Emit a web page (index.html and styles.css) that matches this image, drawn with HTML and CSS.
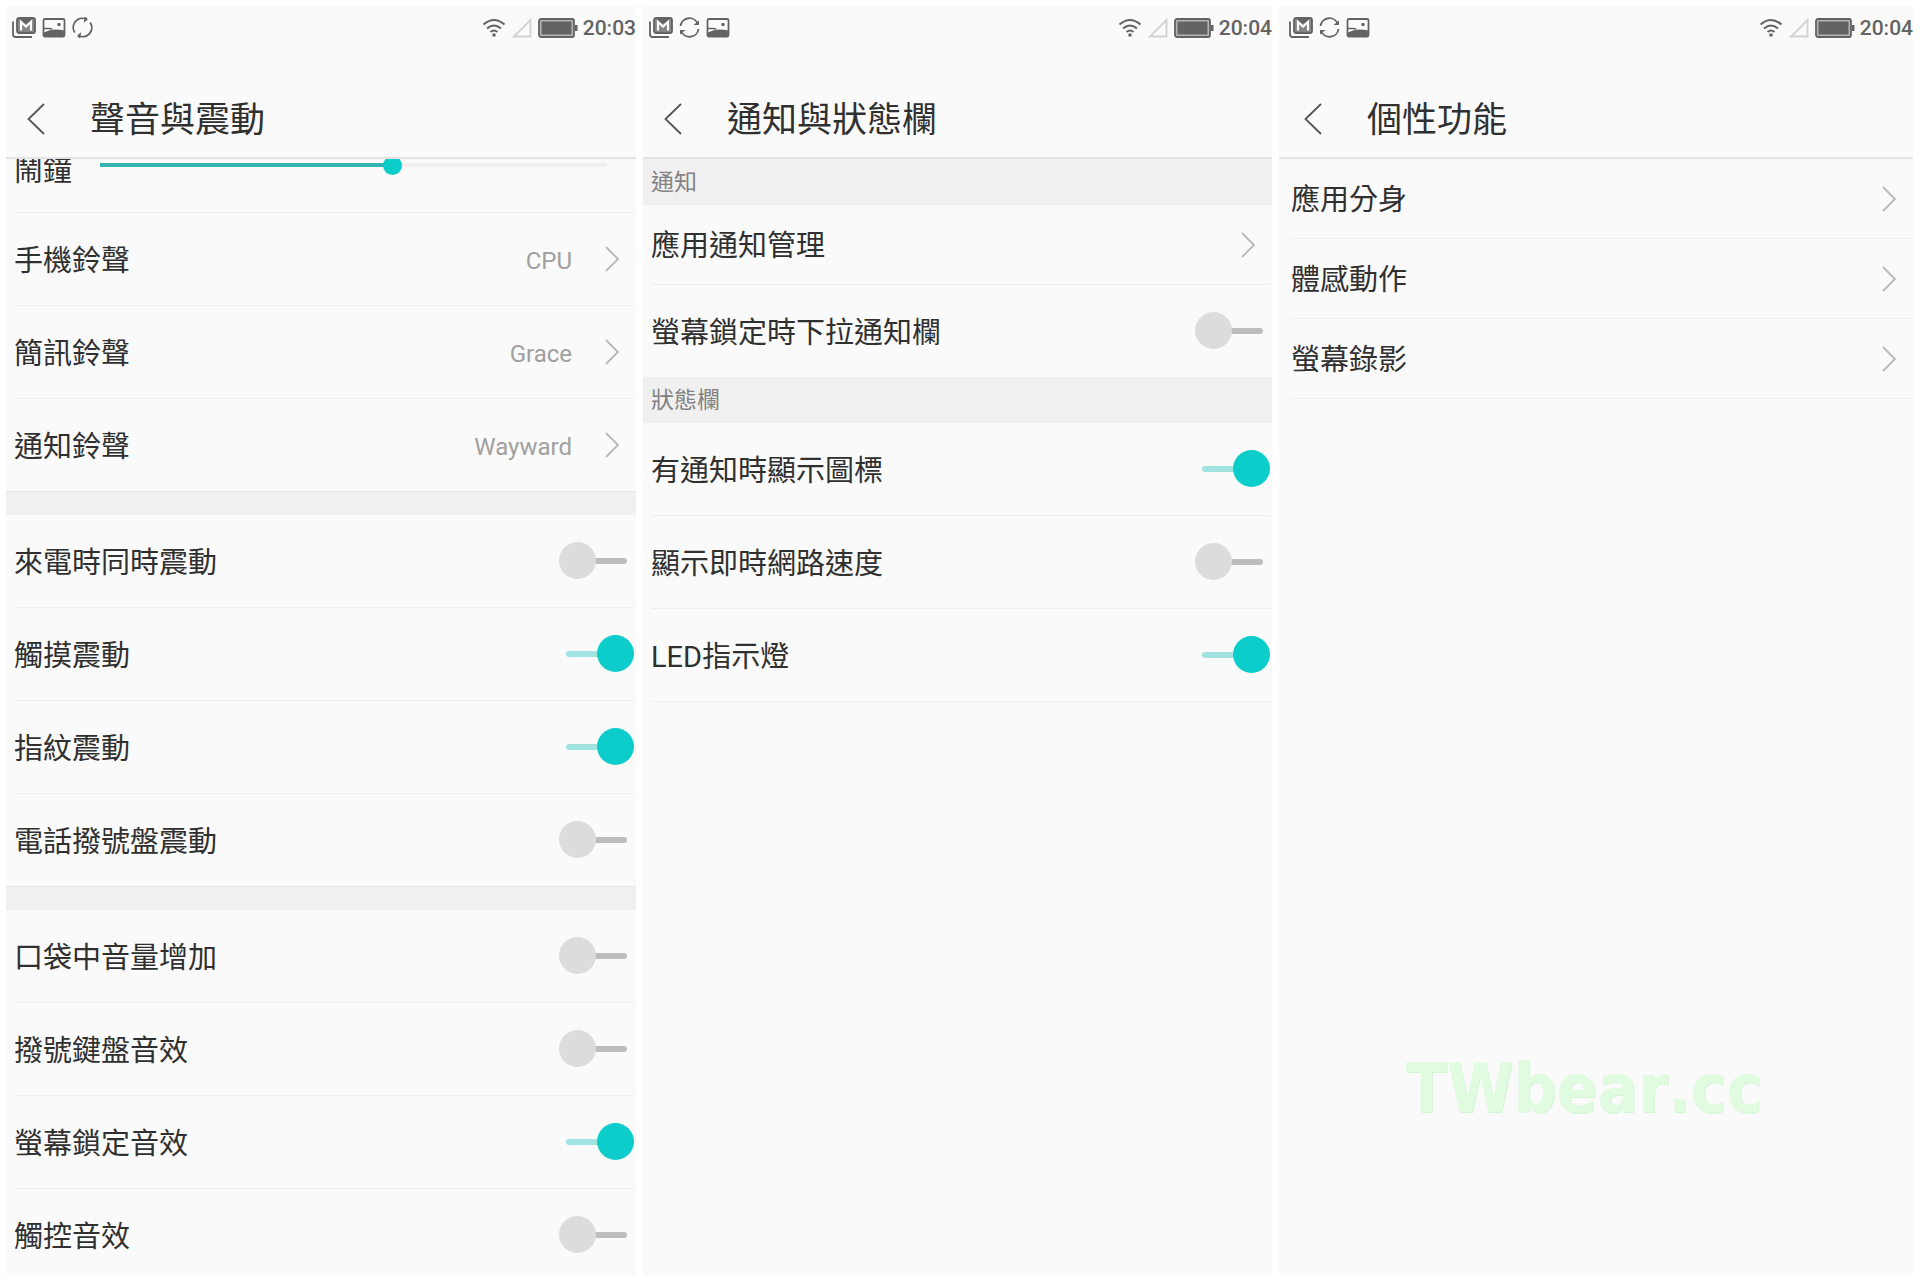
FILE: index.html
```html
<!DOCTYPE html>
<html lang="zh-Hant">
<head>
    <meta charset="UTF-8">
    <meta name="viewport" content="width=device-width, initial-scale=1.0">
    <title>設定</title>
    <link rel="stylesheet" href="styles.css">
</head>
<body>
    <!-- Shared icons -->
    <svg class="sprite" aria-hidden="true">
        <symbol id="icon-mail" viewBox="0 0 24 21">
            <path d="M1 4.500v13q0 2.500 2.500 2.500H20" fill="none" stroke="currentColor" stroke-width="1.800"/>
            <rect x="5" y="1" width="18" height="15" rx="2" fill="#858585" stroke="currentColor" stroke-width="1.800"/>
            <path d="M9 13.500V5l5 4.500L19 5v8.500" fill="none" stroke="#fafafa" stroke-width="2.200"/>
            <path d="M8 2h12l-6 5z" fill="currentColor"/>
        </symbol>
        <symbol id="icon-image" viewBox="0 0 24 21">
            <rect x="1.500" y="2" width="21" height="17.500" rx="1.500" fill="none" stroke="currentColor" stroke-width="1.800"/>
            <path d="M2 19v-3.500Q8 12.500 13 12.500t9.500 1V19z" fill="currentColor"/>
            <path d="M2 11.500h4.500l4 .5" fill="none" stroke="currentColor" stroke-width="1.500"/>
            <circle cx="17" cy="7.500" r="1.700" fill="currentColor"/>
        </symbol>
        <symbol id="icon-refresh" viewBox="0 0 21 21">
            <g fill="none" stroke="currentColor" stroke-width="1.800">
                <path d="M1.500 9A9 9 0 0 1 19 7.500"/>
                <path d="M19.500 12A9 9 0 0 1 2 13.500"/>
            </g>
            <path d="M14.500 8h5.500V3.500zM6.500 13H1v4.500z" fill="currentColor"/>
        </symbol>
        <symbol id="icon-sync" viewBox="0 0 21 21">
            <g transform="rotate(-42 10.500 10.500)">
                <g fill="none" stroke="currentColor" stroke-width="1.800">
                    <path d="M1.500 9A9 9 0 0 1 19 7.500"/>
                    <path d="M19.500 12A9 9 0 0 1 2 13.500"/>
                </g>
                <path d="M14.500 8h5.500V3.500zM6.500 13H1v4.500z" fill="currentColor"/>
            </g>
        </symbol>
        <symbol id="icon-wifi" viewBox="0 0 24 20">
            <g fill="none" stroke="currentColor" stroke-width="2">
                <path d="M1.500 6.500q10.500-9 21 0"/>
                <path d="M5 10.500q7-6 14 0"/>
                <path d="M8.500 14q3.500-3 7 0"/>
            </g>
            <circle cx="12" cy="17" r="1.800" fill="currentColor"/>
        </symbol>
        <symbol id="icon-signal" viewBox="0 0 20 20">
            <path d="M18.500 2v16.500H2z" fill="none" stroke="#d2d2d2" stroke-width="1.800"/>
        </symbol>
        <symbol id="icon-battery" viewBox="0 0 40 20">
            <rect x="1" y="1" width="35" height="18" rx="2" fill="#b4b4b4" stroke="currentColor" stroke-width="1.800"/>
            <rect x="3.500" y="3.500" width="30" height="13" fill="currentColor"/>
            <path d="M37 7h2.500v6H37z" fill="currentColor"/>
        </symbol>
        <symbol id="icon-back" viewBox="0 0 18 32">
            <path d="M17 1L1.500 16 17 31" fill="none" stroke="currentColor" stroke-width="1.800"/>
        </symbol>
        <symbol id="icon-next" viewBox="0 0 14 26">
            <path d="M1 1l12 12L1 25" fill="none" stroke="currentColor" stroke-width="1.800"/>
        </symbol>
    </svg>

    <div class="screens">
        <!-- Sound and vibration -->
        <section class="screen">
            <header class="screen-header">
                <div class="status-bar">
                    <svg class="icon-wide"><use href="#icon-mail"/></svg>
                    <svg class="icon-wide"><use href="#icon-image"/></svg>
                    <svg class="icon-round"><use href="#icon-sync"/></svg>
                    <div class="status-right">
                        <svg class="icon-wifi"><use href="#icon-wifi"/></svg>
                        <svg class="icon-signal"><use href="#icon-signal"/></svg>
                        <svg class="icon-battery"><use href="#icon-battery"/></svg>
                        <time>20:03</time>
                    </div>
                </div>
                <div class="title-bar">
                    <button class="back-btn" aria-label="返回"><svg><use href="#icon-back"/></svg></button>
                    <h1>聲音與震動</h1>
                </div>
            </header>
            <main class="screen-body">
                <div class="group scrolled">
                    <div class="row slider-row">
                        <label for="alarmVolume">鬧鐘</label>
                        <input type="range" id="alarmVolume" class="slider" min="0" max="100" value="58">
                    </div>
                    <a class="row" href="#"><span>手機鈴聲</span><span class="value">CPU</span><svg class="next"><use href="#icon-next"/></svg></a>
                    <a class="row" href="#"><span>簡訊鈴聲</span><span class="value">Grace</span><svg class="next"><use href="#icon-next"/></svg></a>
                    <a class="row" href="#"><span>通知鈴聲</span><span class="value">Wayward</span><svg class="next"><use href="#icon-next"/></svg></a>
                </div>
                <div class="divider"></div>
                <div class="group">
                    <label class="row"><span>來電時同時震動</span><input type="checkbox" class="switch"></label>
                    <label class="row"><span>觸摸震動</span><input type="checkbox" class="switch" checked></label>
                    <label class="row"><span>指紋震動</span><input type="checkbox" class="switch" checked></label>
                    <label class="row"><span>電話撥號盤震動</span><input type="checkbox" class="switch"></label>
                </div>
                <div class="divider"></div>
                <div class="group">
                    <label class="row"><span>口袋中音量增加</span><input type="checkbox" class="switch"></label>
                    <label class="row"><span>撥號鍵盤音效</span><input type="checkbox" class="switch"></label>
                    <label class="row"><span>螢幕鎖定音效</span><input type="checkbox" class="switch" checked></label>
                    <label class="row"><span>觸控音效</span><input type="checkbox" class="switch"></label>
                </div>
            </main>
        </section>

        <!-- Notifications and status bar -->
        <section class="screen">
            <header class="screen-header">
                <div class="status-bar">
                    <svg class="icon-wide"><use href="#icon-mail"/></svg>
                    <svg class="icon-round"><use href="#icon-refresh"/></svg>
                    <svg class="icon-wide"><use href="#icon-image"/></svg>
                    <div class="status-right">
                        <svg class="icon-wifi"><use href="#icon-wifi"/></svg>
                        <svg class="icon-signal"><use href="#icon-signal"/></svg>
                        <svg class="icon-battery"><use href="#icon-battery"/></svg>
                        <time>20:04</time>
                    </div>
                </div>
                <div class="title-bar">
                    <button class="back-btn" aria-label="返回"><svg><use href="#icon-back"/></svg></button>
                    <h1>通知與狀態欄</h1>
                </div>
            </header>
            <main class="screen-body">
                <h2 class="section-title">通知</h2>
                <div class="group">
                    <a class="row short" href="#"><span>應用通知管理</span><svg class="next"><use href="#icon-next"/></svg></a>
                    <label class="row"><span>螢幕鎖定時下拉通知欄</span><input type="checkbox" class="switch"></label>
                </div>
                <h2 class="section-title">狀態欄</h2>
                <div class="group closed">
                    <label class="row"><span>有通知時顯示圖標</span><input type="checkbox" class="switch" checked></label>
                    <label class="row"><span>顯示即時網路速度</span><input type="checkbox" class="switch"></label>
                    <label class="row"><span>LED指示燈</span><input type="checkbox" class="switch" checked></label>
                </div>
            </main>
        </section>

        <!-- Personal features -->
        <section class="screen inset">
            <header class="screen-header">
                <div class="status-bar">
                    <svg class="icon-wide"><use href="#icon-mail"/></svg>
                    <svg class="icon-round"><use href="#icon-refresh"/></svg>
                    <svg class="icon-wide"><use href="#icon-image"/></svg>
                    <div class="status-right">
                        <svg class="icon-wifi"><use href="#icon-wifi"/></svg>
                        <svg class="icon-signal"><use href="#icon-signal"/></svg>
                        <svg class="icon-battery"><use href="#icon-battery"/></svg>
                        <time>20:04</time>
                    </div>
                </div>
                <div class="title-bar">
                    <button class="back-btn" aria-label="返回"><svg><use href="#icon-back"/></svg></button>
                    <h1>個性功能</h1>
                </div>
            </header>
            <main class="screen-body">
                <div class="group closed">
                    <a class="row short" href="#"><span>應用分身</span><svg class="next"><use href="#icon-next"/></svg></a>
                    <a class="row short" href="#"><span>體感動作</span><svg class="next"><use href="#icon-next"/></svg></a>
                    <a class="row short" href="#"><span>螢幕錄影</span><svg class="next"><use href="#icon-next"/></svg></a>
                </div>
            </main>
            <div class="watermark">TWbear.cc</div>
        </section>
    </div>
</body>
</html>
```

FILE: styles.css
```css
* {
    box-sizing: border-box;
}

body {
    margin: 0;
    background-color: #fff;
    color: #303030;
    font-family: Roboto, "Noto Sans CJK TC", sans-serif;
}

.sprite {
    display: none;
}

.screens {
    display: grid;
    grid-template-columns: 630fr 629fr 634fr;
    gap: 7px;
    height: 100vh;
    padding: 6px 7px 7px 6px;
}

.screen {
    --inset: 8px;
    position: relative;
    display: flex;
    flex-direction: column;
    min-width: 0;
    overflow: hidden;
    background-color: #fafafa;
}

.screen.inset {
    --inset: 12px;
}

/* Status bar */
.screen-header {
    flex: none;
    border-bottom: 2px solid #e4e4e4;
}

.status-bar {
    display: flex;
    align-items: center;
    gap: 6px;
    height: 43px;
    padding-left: calc(var(--inset) - 2px);
    color: #636363;
}

.status-right {
    display: flex;
    align-items: center;
    gap: 6px;
    margin-left: auto;
}

.icon-wide {
    width: 24px;
    height: 21px;
}

.icon-round {
    width: 21px;
    height: 21px;
}

.icon-wifi {
    width: 24px;
    height: 20px;
}

.icon-signal {
    width: 20px;
    height: 20px;
}

.icon-battery {
    width: 40px;
    height: 20px;
}

time {
    margin-left: -1px;
    font-size: 21px;
    font-weight: 500;
    line-height: 24px;
}

/* Title */
.title-bar {
    display: flex;
    align-items: center;
    gap: 45px;
    height: 108px;
    padding: 32px 0 0 calc(var(--inset) + 13px);
}

.back-btn {
    display: flex;
    padding: 0;
    border: none;
    background: none;
    color: #555;
    cursor: pointer;
}

.back-btn svg {
    width: 18px;
    height: 32px;
}

h1 {
    margin: 0;
    padding-top: 3px;
    font-size: 35px;
    font-weight: 400;
    line-height: 48px;
}

/* Lists */
.screen-body {
    flex: 1;
    min-height: 0;
    overflow: hidden;
}

.group {
    margin: 0 2px 0 var(--inset);
}

.scrolled {
    margin-top: -39px;
}

.row {
    display: flex;
    align-items: center;
    height: 93px;
    border-bottom: 1px solid #eee;
    color: inherit;
    font-size: 29px;
    line-height: 40px;
    text-decoration: none;
}

.row span {
    padding-top: 3px;
}

.row.short {
    height: 80px;
}

.group:not(.closed) .row:last-child {
    height: 92px;
    border-bottom: none;
}

.divider {
    height: 24px;
    border-top: 1px solid #e6e6e6;
    background-color: #f0f0f0;
}

.section-title {
    height: 46px;
    margin: 0;
    padding-left: var(--inset);
    background-color: #f0f0f0;
    color: #828282;
    font-size: 23px;
    font-weight: 400;
    line-height: 48px;
}

.value {
    margin-left: auto;
    color: #a0a0a0;
    font-size: 24px;
}

.next {
    width: 14px;
    height: 26px;
    margin: 0 15px 0 auto;
    color: #b8b8b8;
}

.value + .next {
    margin-left: 33px;
}

/* Switch */
.switch {
    position: relative;
    width: 75px;
    height: 37px;
    margin: 0 0 2px auto;
    appearance: none;
    cursor: pointer;
}

.switch::before,
.switch::after {
    content: "";
    position: absolute;
}

.switch::before {
    top: 16px;
    left: 18px;
    width: 50px;
    height: 6px;
    border-radius: 3px;
    background-color: #bdbdbd;
}

.switch::after {
    top: 0;
    left: 0;
    width: 37px;
    height: 37px;
    border-radius: 50%;
    background-color: #dcdcdc;
}

.switch:checked::before {
    left: 7px;
    background-color: #a0e3e0;
}

.switch:checked::after {
    left: 38px;
    background-color: #0ccdca;
}

/* Volume slider */
.slider-row label {
    padding-top: 10px;
}

.slider {
    flex: 1;
    height: 20px;
    margin: 0 27px 2px 28px;
    appearance: none;
    background: linear-gradient(to right, #35b3b0 57%, #f0f0f0 57%) center / 100% 4px no-repeat;
}

.slider::-webkit-slider-thumb {
    width: 19px;
    height: 19px;
    border-radius: 50%;
    appearance: none;
    background-color: #0ccdca;
}

.watermark {
    position: absolute;
    bottom: 148px;
    left: 20%;
    color: #e0fbe0;
    font-family: "DejaVu Sans Condensed", "DejaVu Sans", sans-serif;
    font-size: 67px;
    font-weight: 700;
    font-kerning: none;
    line-height: 76px;
    text-shadow: 1px 1px 0 #d4f6d6;
}
```
